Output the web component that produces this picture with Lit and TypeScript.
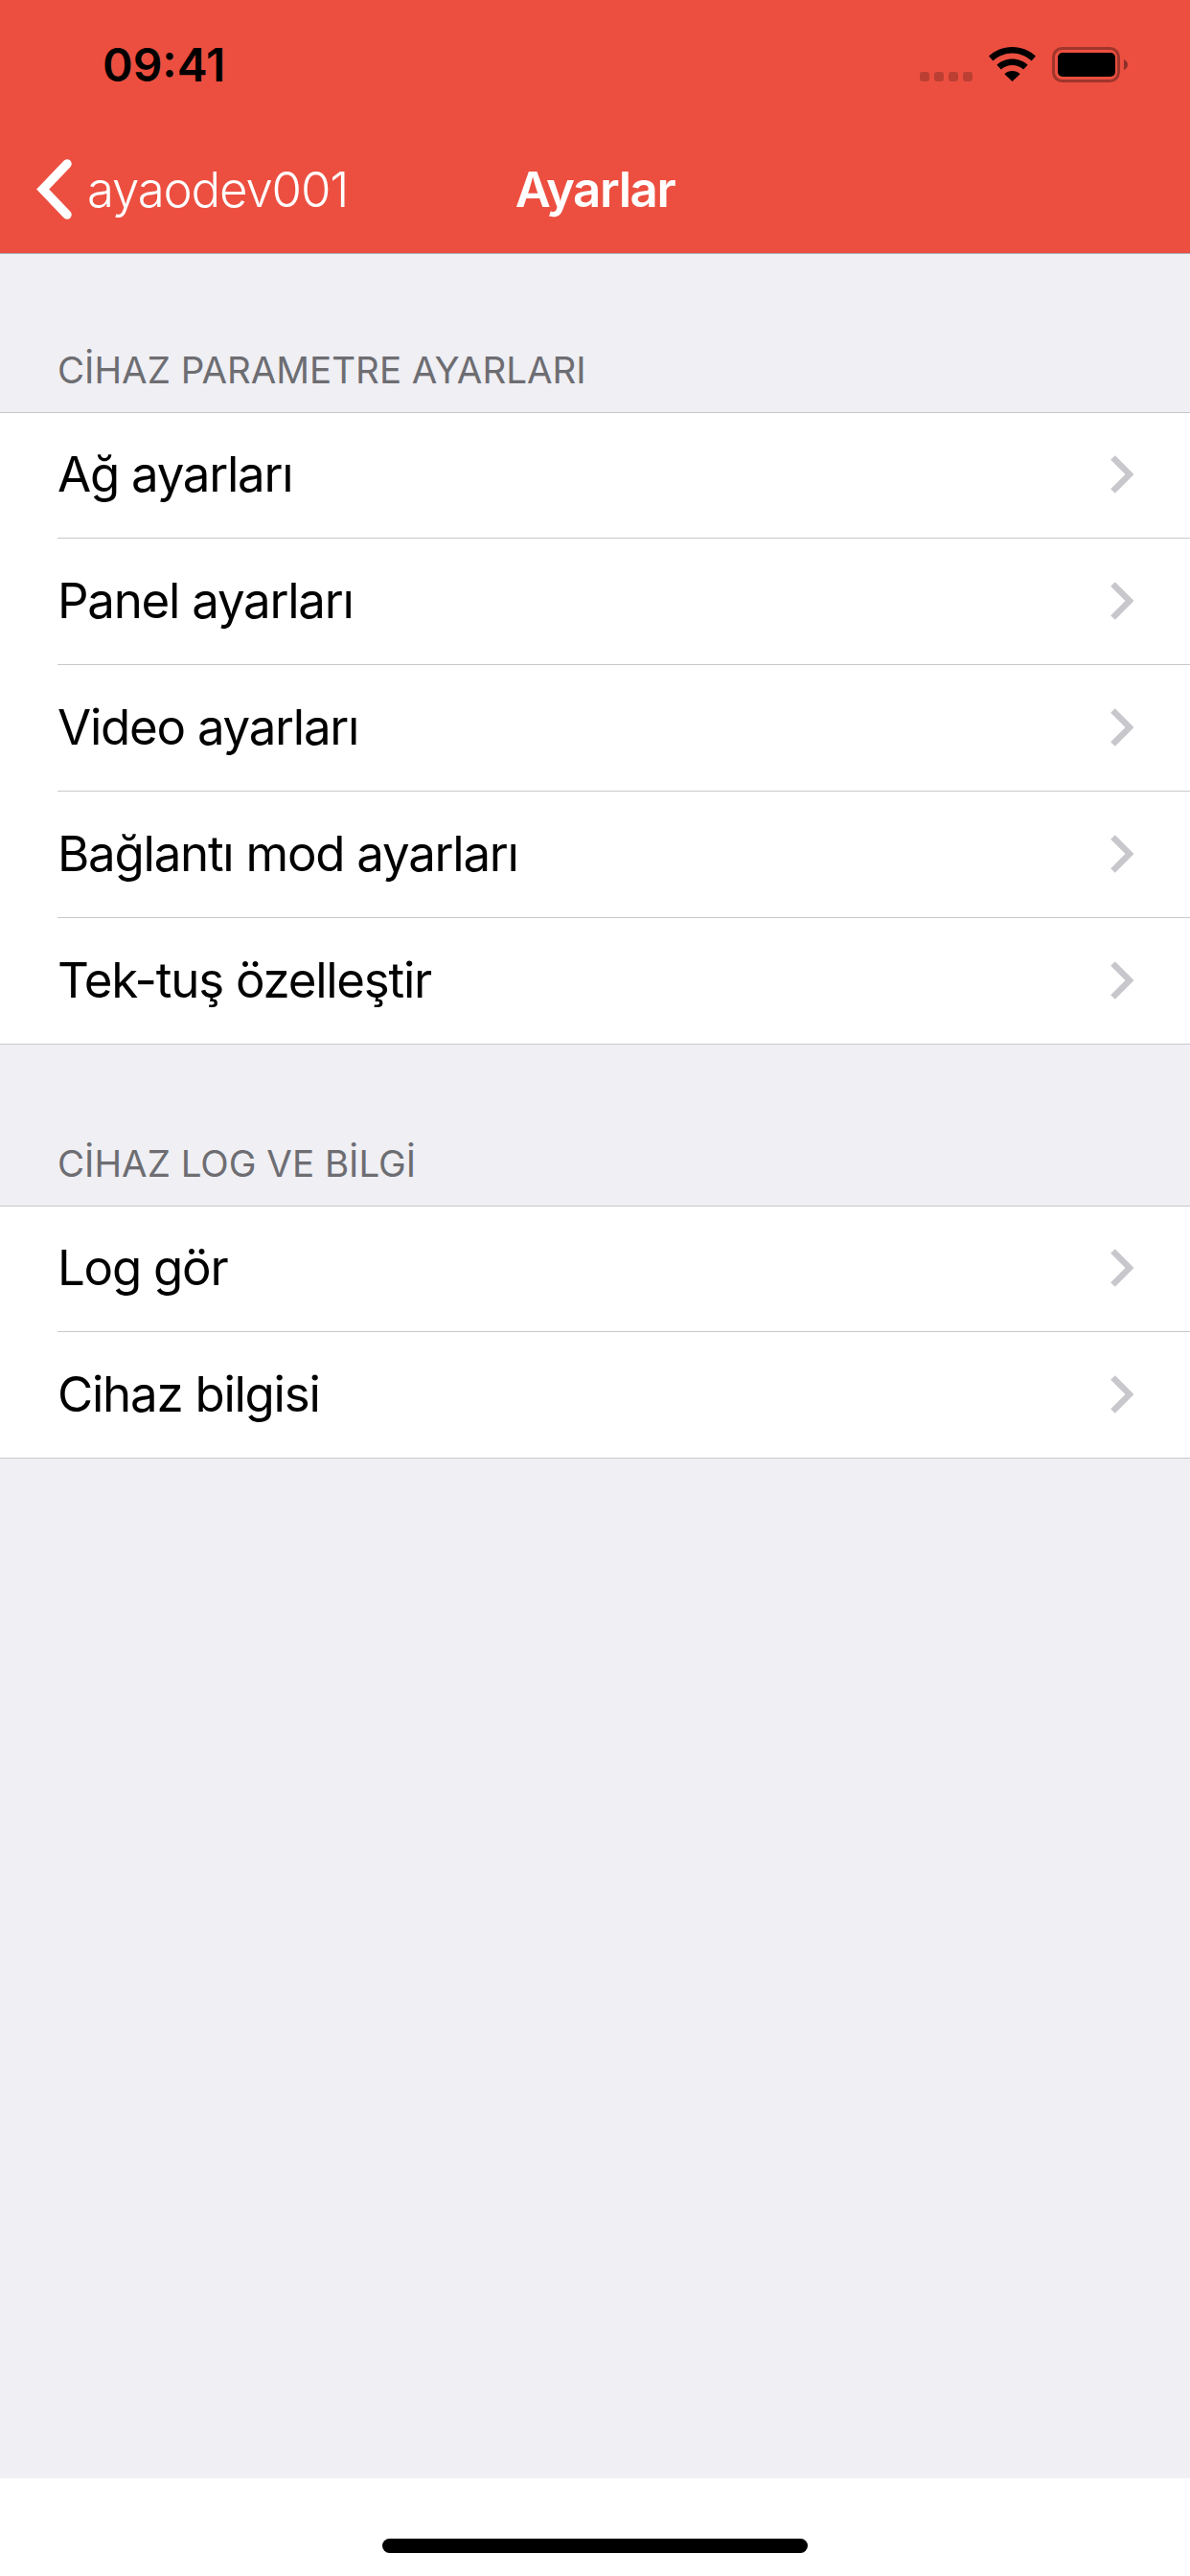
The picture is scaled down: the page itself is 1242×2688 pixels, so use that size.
import { LitElement, html, css } from "lit";
import { customElement } from "lit/decorators.js";

const SECTIONS = [
  { title: "CİHAZ PARAMETRE AYARLARI", rows: ["Ağ ayarları", "Panel ayarları", "Video ayarları", "Bağlantı mod ayarları", "Tek-tuş özelleştir"] },
  { title: "CİHAZ LOG VE BİLGİ", rows: ["Log gör", "Cihaz bilgisi"] },
];

@customElement("app-root")
export class AppRoot extends LitElement {
  static styles = css`
    :host { display: block; font-family: Inter, "Noto Sans", sans-serif; }
    .screen { width: 1242px; height: 2688px; display: flex; flex-direction: column; background: #efeff4; overflow: hidden; }
    .header { height: 265px; box-sizing: border-box; background: #ec4f40; border-bottom: 1px solid #a8a8ac; flex: none; }
    .status { height: 132px; display: flex; align-items: flex-start; padding-left: 107px; box-sizing: border-box; }
    .time { font-size: 48px; font-weight: 600; line-height: 57px; margin-top: 39px; color: #000; }
    .status-icons { margin-left: auto; margin-right: 65px; margin-top: 49px; display: flex; align-items: flex-start; }
    .dots { display: flex; gap: 5px; margin-top: 26px; margin-right: 17px; }
    .dot { width: 10px; height: 10px; border-radius: 3px; background: rgba(0,0,0,.2); }
    .wifi { width: 49px; height: 36px; display: block; margin-right: 17px; }
    .battery { width: 79px; height: 37px; display: block; }
    .nav { height: 132px; display: grid; grid-template-columns: 1fr auto 1fr; align-items: center; color: #fff; }
    .back { display: flex; align-items: center; padding-left: 38px; gap: 15px; }
    .back svg { width: 38px; height: 64px; display: block; }
    .back span { font-size: 51px; font-weight: 300; line-height: 62px; letter-spacing: -1.2px; }
    .title { font-size: 51px; font-weight: 600; line-height: 62px; letter-spacing: -1.4px; }
    .section-title { height: 165px; box-sizing: border-box; padding: 0 60px 21px; display: flex; align-items: flex-end; font-size: 38.5px; line-height: 46px; color: #6d6d72; }
    .section + .section .section-title { height: 168px; }
    .list { background: #fff; border-top: 1px solid #c8c7cc; border-bottom: 1px solid #c8c7cc; }
    .row { height: 132px; box-sizing: border-box; display: flex; align-items: center; padding: 0 59px 2px 0; margin-left: 60px; font-size: 51px; line-height: 62px; letter-spacing: -1.25px; color: #000; }
    .row:first-child { height: 130px; }
    .row + .row { border-top: 1px solid #c8c7cc; }
    .row span { flex: 1; }
    .chev { width: 24px; height: 40px; display: block; }
    .home { margin-top: auto; height: 102px; background: #fff; display: flex; justify-content: center; padding-top: 63px; box-sizing: border-box; flex: none; }
    .bar { width: 444px; height: 15px; background: #000; border-radius: 8px; }
  `;

  render() {
    return html`
      <div class="screen">
        <div class="header">
          <div class="status">
            <div class="time">09:41</div>
            <div class="status-icons">
              <div class="dots"><i class="dot"></i><i class="dot"></i><i class="dot"></i><i class="dot"></i></div>
              <svg class="wifi" viewBox="0 0 49 36">
                <path d="M24.500 0C15 0 6.500 3.600 0 9.600l4.400 4.800C9.800 9.400 16.800 6.400 24.500 6.400s14.700 3 20.100 8l4.400-4.800C42.500 3.600 34 0 24.500 0z"/>
                <path d="M24.500 12.500c-6.200 0-11.800 2.300-16.100 6.200l4.500 4.900c3.100-2.800 7.200-4.500 11.600-4.500s8.500 1.700 11.600 4.500l4.500-4.900c-4.300-3.900-9.900-6.200-16.100-6.200z"/>
                <path d="M24.500 25c-3.100 0-6 1.200-8.100 3.200L24.500 36l8.100-7.800c-2.100-2-5-3.200-8.100-3.200z"/>
              </svg>
              <svg class="battery" viewBox="0 0 79 37">
                <rect x="1.500" y="1.500" width="68" height="34" rx="9" fill="none" stroke="rgba(0,0,0,.32)" stroke-width="3"/>
                <rect x="6" y="6" width="60" height="25" rx="5" fill="#000"/>
                <path d="M75 13c2.500 1 4 3 4 5.500s-1.500 4.500-4 5.500z" fill="rgba(0,0,0,.4)"/>
              </svg>
            </div>
          </div>
          <div class="nav">
            <div class="back">
              <svg viewBox="0 0 38 64"><path d="M32 5 6.700 31.500 32 58" fill="none" stroke="#fff" stroke-width="9.500" stroke-linecap="round" stroke-linejoin="miter"/></svg>
              <span>ayaodev001</span>
            </div>
            <div class="title">Ayarlar</div>
            <div></div>
          </div>
        </div>
        ${SECTIONS.map((s) => html`
          <div class="section">
            <div class="section-title">${s.title}</div>
            <div class="list">
              ${s.rows.map((r) => html`
                <div class="row">
                  <span>${r}</span>
                  <svg class="chev" viewBox="0 0 24 40"><path d="M2.500 2.500 20 20 2.500 37.500" fill="none" stroke="#c7c7cc" stroke-width="6.500"/></svg>
                </div>`)}
            </div>
          </div>`)}
        <div class="home"><div class="bar"></div></div>
      </div>
    `;
  }
}
